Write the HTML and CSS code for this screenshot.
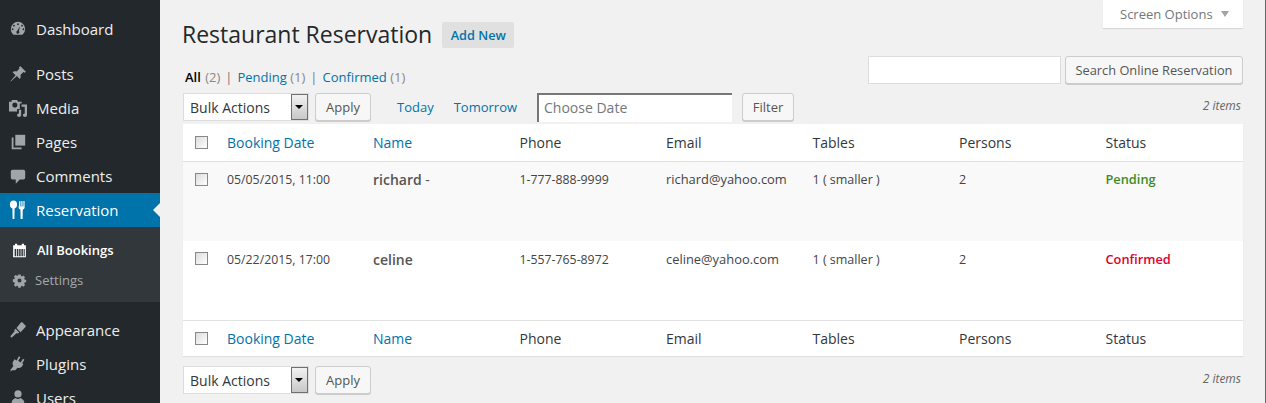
FILE: index.html
```html
<!DOCTYPE html>
<html lang="en">
<head>
<meta charset="utf-8">
<title>Restaurant Reservation</title>
<link rel="stylesheet" href="styles.css">
</head>
<body>
<div class="app">
  <nav class="sidebar">
    <ul class="menu menu-first">
      <li class="item"><svg class="ico" viewBox="0 0 20 20"><path fill-rule="evenodd" d="M10 2a8 8 0 0 0-8 8c0 2.600 1.200 4.900 3 6.300h10a8 8 0 0 0 3-6.300 8 8 0 0 0-8-8zM10 3.600a1 1 0 1 1 0 2 1 1 0 0 1 0-2zM5.500 5.300a1 1 0 1 1 0 2 1 1 0 0 1 0-2zM14.500 5.300a1 1 0 1 1 0 2 1 1 0 0 1 0-2zM4 9.300a1 1 0 1 1 0 2 1 1 0 0 1 0-2zM16 9.300a1 1 0 1 1 0 2 1 1 0 0 1 0-2zM12.300 7l-1.300 5.200a1.700 1.700 0 1 1-1.800-.3z"/></svg>Dashboard</li>
    </ul>
    <ul class="menu menu-group">
      <li class="item"><svg class="ico" viewBox="0 0 20 20"><path d="M12.400 1.200l6.400 6.400-1.500 1-1.300-.7-3.300 3.300c.7 2 .2 3.400-.7 4.400l-3.300-3.300L2 18.400l-.4-.4 5.700-6.700L4 8c1-1 2.400-1.400 4.400-.7l3.300-3.300-.6-1.300z"/></svg>Posts</li>
      <li class="item"><svg class="ico" viewBox="0 0 20 20"><path fill-rule="evenodd" d="M3 1h6l1 2h4v2h-2v6H9v3H0V3h3zM6.500 4a2.800 2.800 0 1 0 0 5.600 2.800 2.800 0 0 0 0-5.600z"/><path d="M14 6h6v12a2.300 2 0 1 1-2.500-2V8.500H14zM11 12h2.500v6a2.300 2 0 1 1-2.500-2z"/></svg>Media</li>
      <li class="item"><svg class="ico" viewBox="0 0 20 20"><path d="M7 2h11v12H7z"/><path d="M5 5v11h9v2H3V5z"/></svg>Pages</li>
      <li class="item"><svg class="ico" viewBox="0 0 20 20"><path d="M4 3h12a2 2 0 0 1 2 2v7a2 2 0 0 1-2 2h-4l-4.500 4.500V14H4a2 2 0 0 1-2-2V5a2 2 0 0 1 2-2z"/></svg>Comments</li>
      <li class="item item-current"><svg class="ico ico-tall ico-white" viewBox="0 0 20 22"><ellipse cx="5" cy="5" rx="4" ry="4.500"/><path d="M3.800 8h2.400l-.2 13H4zM11.500 1h1.200v6h1V1h1.300v6h1V1h1.300v7.500c0 1-1 1.700-2 2l-.2 10.500h-2.200l-.2-10.500c-1-.3-2-1-2-2z"/></svg>Reservation<span class="pointer"></span></li>
      <li class="sub">
        <div class="sub-item sub-current"><svg class="ico-sm ico-white" viewBox="0 0 20 20"><path fill-rule="evenodd" d="M4 1h3v2h6V1h3v2h2.500v16h-17V3H4zM3.500 8v9.500h2V8zM6.500 8v9.500h2V8zM9.500 8v9.500h2V8zM12.500 8v9.500h2V8zM15.500 8v9.500h1.500V8z"/></svg>All Bookings</div>
        <div class="sub-item"><svg class="ico-sm" viewBox="0 0 20 20"><path fill-rule="evenodd" d="M8.300 1h3.400l.5 2.400 1.500.6 2.100-1.300 2.400 2.400-1.300 2.100.6 1.500 2.400.5v3.400l-2.400.5-.6 1.500 1.300 2.100-2.400 2.400-2.100-1.300-1.500.6-.5 2.400H8.300l-.5-2.400-1.500-.6-2.100 1.300-2.400-2.400 1.300-2.100-.6-1.500L.1 11.700V8.300l2.400-.5.6-1.500-1.300-2.100 2.400-2.400 2.100 1.300 1.500-.6zM10 7a3 3 0 1 0 0 6 3 3 0 0 0 0-6z" transform="translate(1 1) scale(.9)"/></svg><span class="settings-label">Settings</span></div>
      </li>
    </ul>
    <ul class="menu menu-group">
      <li class="item"><svg class="ico" viewBox="0 0 20 20"><path d="M13 2l1.500-.8 4.300 4.300-1 1.700-5 5.200-4.500-4.500zM7.300 8.700l4 4-1.500 1.300-1.500-.3L2.800 18.500 1.500 17l4.700-5.600-.3-1.400z"/></svg>Appearance</li>
      <li class="item"><svg class="ico" viewBox="0 0 20 20"><path d="M11 1.500l1.700 1-2.500 4 2.800 1.700 2.500-4 1.600 1-2.500 4 1.400.9-1.500 2.400c-1 1.700-3 2.300-5 1.600L7 17H3.300l-1.800 1.500.4-2.300L5 12.300c-1.200-1.500-1.400-3.500-.4-5l1.500-2.500 2.400 1.400z"/></svg>Plugins</li>
      <li class="item"><svg class="ico" viewBox="0 0 20 20"><circle cx="10" cy="5.500" r="4"/><path d="M3 18v-3c0-3 3-4.500 4.500-5 .7.600 1.500 1 2.500 1s1.800-.4 2.500-1c1.500.5 4.500 2 4.500 5v3z"/></svg>Users</li>
    </ul>
  </nav>
  <main class="content">
    <div class="screen-options">Screen Options<span class="caret"></span></div>
    <header class="title-row">
      <h1 class="title">Restaurant Reservation</h1>
      <a class="add-new">Add New</a>
    </header>
    <div class="filter-top">
      <ul class="views">
        <li class="view view-active"><b class="view-current">All</b> <span class="count">(2)</span></li>
        <li class="sep">|</li>
        <li class="view"><a class="link">Pending</a> <span class="count">(1)</span></li>
        <li class="sep">|</li>
        <li class="view"><a class="link">Confirmed</a> <span class="count">(1)</span></li>
      </ul>
      <div class="search">
        <div class="input search-input"></div>
        <button class="btn btn-search">Search Online Reservation</button>
      </div>
    </div>
    <div class="nav-row">
      <div class="select">Bulk Actions<span class="select-arrow"></span></div>
      <button class="btn btn-apply">Apply</button>
      <a class="link quick quick-today">Today</a>
      <a class="link quick quick-tomorrow">Tomorrow</a>
      <div class="date-input">Choose Date</div>
      <button class="btn btn-filter">Filter</button>
      <span class="items">2 items</span>
    </div>
    <table class="table">
      <thead>
        <tr>
          <th class="col-check"><span class="check"></span></th>
          <th class="col-date"><a class="link">Booking Date</a></th>
          <th class="col"><a class="link">Name</a></th>
          <th class="col">Phone</th>
          <th class="col">Email</th>
          <th class="col">Tables</th>
          <th class="col">Persons</th>
          <th>Status</th>
        </tr>
      </thead>
      <tbody>
        <tr class="row row-alt">
          <td class="col-check"><span class="check"></span></td>
          <td class="num">05/05/2015, 11:00</td>
          <td class="name">richard <span class="dash">-</span></td>
          <td class="num">1-777-888-9999</td>
          <td class="mail">richard@yahoo.com</td>
          <td>1 ( smaller )</td>
          <td>2</td>
          <td class="status-pending">Pending</td>
        </tr>
        <tr class="row row-plain">
          <td class="col-check"><span class="check"></span></td>
          <td class="num">05/22/2015, 17:00</td>
          <td class="name">celine</td>
          <td class="num">1-557-765-8972</td>
          <td class="mail">celine@yahoo.com</td>
          <td>1 ( smaller )</td>
          <td>2</td>
          <td class="status-confirmed">Confirmed</td>
        </tr>
      </tbody>
      <tfoot>
        <tr>
          <th class="col-check"><span class="check"></span></th>
          <th><a class="link">Booking Date</a></th>
          <th><a class="link">Name</a></th>
          <th>Phone</th>
          <th>Email</th>
          <th>Tables</th>
          <th>Persons</th>
          <th>Status</th>
        </tr>
      </tfoot>
    </table>
    <div class="nav-row nav-bottom">
      <div class="select">Bulk Actions<span class="select-arrow"></span></div>
      <button class="btn btn-apply">Apply</button>
      <span class="items">2 items</span>
    </div>
  </main>
</div>
</body>
</html>
```
FILE: styles.css
```css
* { box-sizing: border-box; }
html, body { margin: 0; height: 403px; overflow: hidden; }
body { font-family: "Open Sans", sans-serif; font-size: 13px; color: #444; background: #f1f1f1; }
.app { display: flex; height: 403px; border-right: 1px solid #666; }
ul { list-style: none; margin: 0; padding: 0; }
a { text-decoration: none; }

.sidebar { width: 160px; flex: none; height: 403px; background: #23282d; color: #eee; padding-top: 12px; overflow: hidden; }
.menu-group { margin-top: 11px; }
.item { height: 34px; display: flex; align-items: center; padding-left: 9px; font-size: 15px; position: relative; }
.item-current { background: #0073aa; color: #fff; }
.ico { width: 18px; height: 18px; margin-right: 9px; fill: #a0a5aa; flex: none; }
.ico-tall { height: 20px; }
.ico-sm { width: 15px; height: 15px; margin-right: 10px; fill: #a0a5aa; flex: none; }
.ico-white { fill: #fff; }
.pointer { position: absolute; right: 0; top: 10px; border: 7px solid transparent; border-left: 0; border-right: 7px solid #f1f1f1; }
.sub { background: #32373c; height: 75px; padding-top: 8px; }
.sub-item { height: 30px; display: flex; align-items: center; padding-left: 12px; font-size: 13px; color: #a5a9ad; }
.settings-label { margin-left: -2px; }
.sub-current { color: #fff; font-weight: 600; }

.content { flex: 1; min-width: 0; padding: 0 22px 0 23px; position: relative; }
.screen-options { position: absolute; top: 0; right: 22px; width: 140px; height: 28px; background: #fff; box-shadow: 0 1px 1px rgba(0,0,0,.1); display: flex; align-items: center; padding-left: 17px; font-size: 13px; color: #72777c; }
.caret { margin-left: 8px; border: 4px solid transparent; border-top: 6px solid #a0a5aa; border-bottom: 0; }

.title-row { display: flex; align-items: center; height: 26px; margin-top: 22px; }
.title { margin: 0 0 2px -1px; font-size: 23px; font-weight: 400; color: #23282d; line-height: 24px; }
.add-new { margin-left: 10px; height: 26px; line-height: 26px; padding: 0 8px 0 8.500px; background: #e0e0e0; color: #0073aa; font-size: 12.700px; font-weight: 600; border-radius: 2px; }

.filter-top { display: flex; justify-content: space-between; align-items: flex-start; height: 37px; margin-top: 8px; }
.views { display: flex; gap: 5px; padding: 12px 0 0 2px; font-size: 13px; line-height: 18px; }
.view-active { color: #000; }
.view-current { font-weight: 600; margin-right: 1px; }
.count { color: #888; }
.sep { color: #777; }
.link { color: #0073aa; }
.search { display: flex; gap: 4px; }
.input { background: #fff; border: 1px solid #ddd; }
.search-input { width: 193px; height: 28px; }
.btn { font: inherit; font-size: 13px; color: #555; background: #f7f7f7; border: 1px solid #ccc; border-radius: 3px; box-shadow: 0 1px 0 #ccc; padding: 0; height: 28px; }
.btn-search { width: 178px; font-size: 12.800px; }

.nav-row { display: flex; align-items: center; height: 28px; }
.select { width: 126px; height: 28px; background: #fff; border: 1px solid #ddd; padding-left: 6px; font-size: 14px; line-height: 27px; color: #32373c; position: relative; }
.select-arrow { position: absolute; right: 0; top: 0; width: 17px; height: 26px; border: 1px solid #707070; background: linear-gradient(#f2f2f2, #c8c8c8); }
.select-arrow::after { content: ""; position: absolute; left: 3px; top: 10px; border: 4px solid transparent; border-top: 4px solid #000; border-bottom: 0; }
.btn-apply { width: 56px; margin-left: 6px; font-size: 13px; }
.quick { font-size: 13px; }
.quick-today { margin-left: 26px; }
.quick-tomorrow { margin-left: 20px; }
.date-input { width: 195px; height: 29px; margin-left: 20px; background: #fff; border-top: 2px solid #767676; border-left: 2px solid #767676; padding-left: 5px; font-size: 14px; line-height: 26px; color: #72777c; }
.btn-filter { width: 52px; margin-left: 10px; }
.items { margin-left: auto; margin-right: 2px; margin-bottom: 4px; font-size: 12px; font-style: italic; color: #666; }

.table { width: 1060px; table-layout: fixed; border-collapse: collapse; background: #fff; margin-top: 3px; box-shadow: 0 1px 1px rgba(0,0,0,.08); font-size: 12.500px; }
.table th, .table td { padding: 0 0 0 7px; text-align: left; font-weight: 400; }
.table th { height: 36px; font-size: 14px; color: #32373c; vertical-align: middle; }
.table thead th { height: 37px; padding-top: 1px; }
.table tfoot th { padding-top: 1px; }
.table thead .col-check, .table tfoot .col-check { padding-top: 0; }
thead tr { border-bottom: 1px solid #e1e1e1; }
tfoot tr { border-top: 1px solid #e1e1e1; }
.table .col-check { width: 37px; padding-left: 12px; }
.col-date { width: 146px; }
.col { width: 146.500px; }
.row td { height: 79px; vertical-align: top; padding-top: 9px; line-height: 17px; color: #444; }
.row-alt td { height: 80px; }
.row-plain td { padding-top: 10px; }
.row-alt .col-check { padding-top: 11px; }
.row-plain .col-check { padding-top: 11px; }
.row-alt { background: #f9f9f9; }
.table td.num { font-size: 12.300px; }
.table td.mail { font-size: 12.900px; }
.table td.name { font-size: 14px; font-weight: 600; color: #555; line-height: 17px; }
.dash { font-weight: 400; }
.table td.status-pending { color: #3f8c1f; font-weight: 600; font-size: 12.800px; }
.table td.status-confirmed { color: #e0002b; font-weight: 600; font-size: 12.800px; }
.check { display: block; width: 13px; height: 13px; border: 1px solid #888; background: linear-gradient(135deg, #dcdcdc, #fff); }
.nav-bottom { margin-top: 10px; }
```
